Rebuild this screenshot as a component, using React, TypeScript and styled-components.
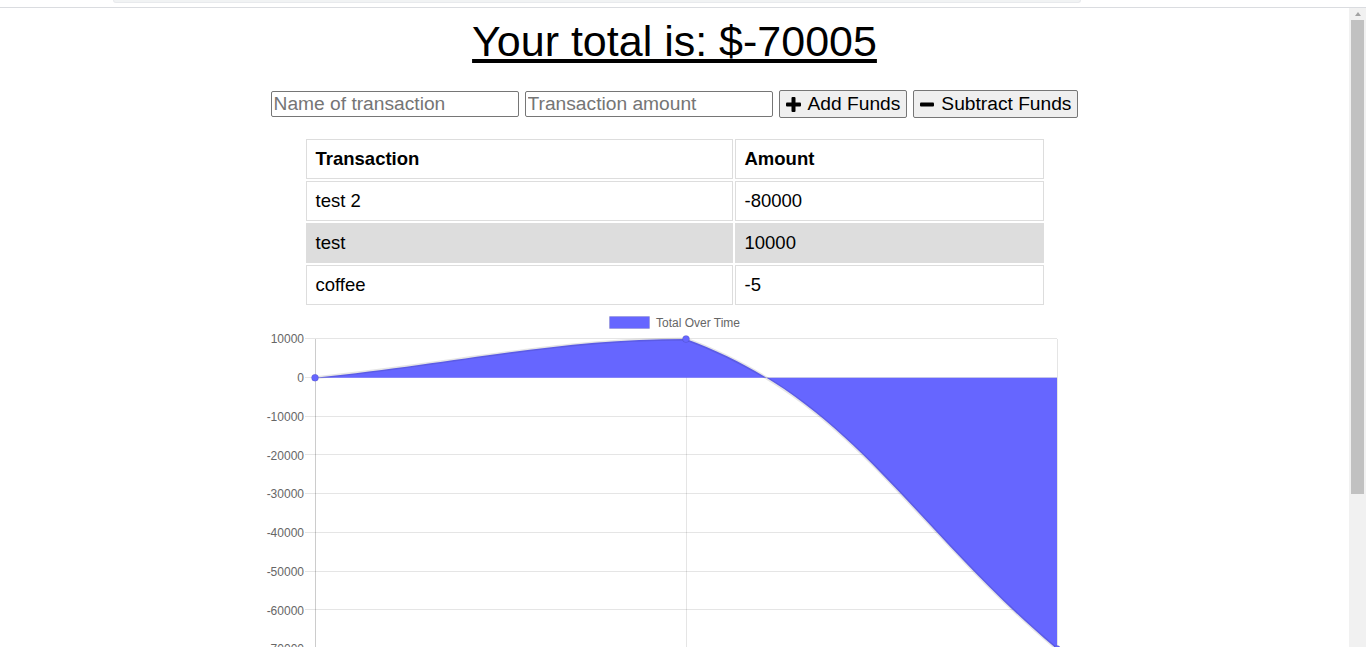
import React from "react";
import styled, { createGlobalStyle } from "styled-components";

interface Transaction {
  name: string;
  value: number;
}

const transactions: Transaction[] = [
  { name: "test 2", value: -80000 },
  { name: "test", value: 10000 },
  { name: "coffee", value: -5 },
];

const total = transactions.reduce((sum, t) => sum + t.value, 0);

// chart geometry, in canvas pixels (canvas is 60% of the page, aspect 2)
const CHART_W = 809;
const CHART_H = 404;
const AREA_LEFT = 45;
const AREA_RIGHT = 787;
const AREA_TOP = 32;
const STEP = 38.76; // px per 10000
const MAX = 10000;
const MIN = -80000;
const yOf = (v: number) => AREA_TOP + ((MAX - v) / 10000) * STEP;
const AREA_BOTTOM = yOf(MIN);

const series = [0, 10000, total];
const points = series.map((v, i) => ({
  x: AREA_LEFT + (i * (AREA_RIGHT - AREA_LEFT)) / (series.length - 1),
  y: yOf(v),
}));

const cap = (v: number, lo: number, hi: number) => Math.max(lo, Math.min(hi, v));

// same spline as chart.js v2 (tension 0.4, control points capped to the area)
function splinePath() {
  const t = 0.4;
  const ctrl = points.map((p, i) => {
    const prev = points[i - 1] || p;
    const next = points[i + 1] || p;
    const d01 = Math.hypot(p.x - prev.x, p.y - prev.y);
    const d12 = Math.hypot(next.x - p.x, next.y - p.y);
    let s01 = d01 / (d01 + d12);
    let s12 = d12 / (d01 + d12);
    if (isNaN(s01)) s01 = 0;
    if (isNaN(s12)) s12 = 0;
    const fa = t * s01;
    const fb = t * s12;
    return {
      px: cap(p.x - fa * (next.x - prev.x), AREA_LEFT, AREA_RIGHT),
      py: cap(p.y - fa * (next.y - prev.y), AREA_TOP, AREA_BOTTOM),
      nx: cap(p.x + fb * (next.x - prev.x), AREA_LEFT, AREA_RIGHT),
      ny: cap(p.y + fb * (next.y - prev.y), AREA_TOP, AREA_BOTTOM),
    };
  });
  let d = `M${points[0].x},${points[0].y}`;
  for (let i = 1; i < points.length; i++) {
    const a = ctrl[i - 1];
    const b = ctrl[i];
    d += ` C${a.nx},${a.ny} ${b.px},${b.py} ${points[i].x},${points[i].y}`;
  }
  return d;
}

const ticks: number[] = [];
for (let v = MAX; v >= MIN; v -= 10000) ticks.push(v);

const GlobalStyle = createGlobalStyle`
  html, body {
    margin: 0;
    height: 100%;
    overflow: hidden;
    background: #fff;
  }
`;

const Page = styled.div`
  display: flex;
  flex-direction: column;
  height: 100vh;
  font-family: "Liberation Sans", Arial, sans-serif;
  color: #000;
`;

const TopStrip = styled.div`
  height: 8px;
  box-sizing: border-box;
  border-bottom: 1px solid #dadce0;
  padding-left: 113px;
`;

const StripBar = styled.div`
  width: 968px;
  height: 3px;
  background: #f1f3f4;
  border: 1px solid #e8eaed;
  border-top: none;
  border-radius: 0 0 8px 8px;
  box-sizing: border-box;
`;

const Body = styled.div`
  display: flex;
  flex: 1;
  min-height: 0;
`;

const Main = styled.main`
  flex: 1;
  overflow: hidden;
  text-align: center;
`;

const Title = styled.h1`
  margin: 8px 0 0;
  font-size: 43px;
  line-height: 50px;
  font-weight: normal;
  text-decoration: underline;
`;

const Form = styled.div`
  display: flex;
  justify-content: center;
  align-items: center;
  gap: 6px;
  margin-top: 24px;
`;

const Input = styled.input`
  width: 248px;
  height: 26px;
  box-sizing: border-box;
  border: 1px solid #767676;
  border-radius: 2px;
  padding: 1px 2px;
  font-family: inherit;
  font-size: 19.2px;
  color: #000;

  &::placeholder {
    color: #757575;
  }
`;

const Button = styled.button`
  display: inline-flex;
  align-items: center;
  gap: 7px;
  height: 28px;
  box-sizing: border-box;
  padding: 0 6px;
  border: 1px solid #767676;
  border-radius: 2px;
  background: #efefef;
  font-family: inherit;
  font-size: 19.2px;
  color: #000;
`;

const Table = styled.table`
  width: 742px;
  margin: 19px auto 0;
  border-spacing: 2px;
  font-size: 18.5px;
  text-align: left;

  & th,
  & td {
    border: 1px solid #ddd;
    padding: 8px 10px 8px 9px;
    line-height: 22px;
  }

  & th:first-child {
    width: 406px;
  }

  & tbody tr:nth-child(even) td {
    background: #ddd;
  }
`;

const ChartWrap = styled.div`
  width: 60%;
  height: ${CHART_H}px;
  margin: 0 auto;

  & svg {
    display: block;
    overflow: visible;
  }
`;

const Scrollbar = styled.div`
  display: flex;
  flex-direction: column;
  align-items: center;
  width: 17px;
  background: #f1f1f1;
`;

const ArrowUp = styled.div`
  width: 0;
  height: 0;
  margin: 4px 0 4px;
  border-left: 3.5px solid transparent;
  border-right: 3.5px solid transparent;
  border-bottom: 4px solid #a3a3a3;
`;

const Thumb = styled.div`
  width: 13px;
  height: 474px;
  background: #c1c1c1;
`;

function PlusIcon() {
  return (
    <svg width="15" height="15" viewBox="0 0 15 15">
      <rect x="5.5" y="0" width="4" height="15" rx="1" fill="#000" />
      <rect x="0" y="5.5" width="15" height="4" rx="1" fill="#000" />
    </svg>
  );
}

function MinusIcon() {
  return (
    <svg width="14" height="15" viewBox="0 0 14 15">
      <rect x="0" y="5.5" width="14" height="4" rx="1" fill="#000" />
    </svg>
  );
}

function Chart() {
  const curve = splinePath();
  const zeroY = yOf(0);
  const last = points[points.length - 1];
  const fill = `${curve} L${last.x},${zeroY} L${points[0].x},${zeroY} Z`;

  return (
    <svg width={CHART_W} height={CHART_H} viewBox={`0 0 ${CHART_W} ${CHART_H}`}>
      <rect x="339.5" y="9.5" width="40" height="12" fill="#6666ff" stroke="rgba(0,0,0,0.1)" />
      <text x="386" y="19.5" fontSize="12" fill="#666" fontFamily="Liberation Sans, Arial, sans-serif">
        Total Over Time
      </text>

      {ticks.map((v) => {
        const y = Math.round(yOf(v)) - 0.5;
        return (
          <g key={v}>
            <line x1={AREA_LEFT - 10} x2={AREA_RIGHT} y1={y} y2={y} stroke="rgba(0,0,0,0.1)" />
            <text
              x={AREA_LEFT - 11}
              y={yOf(v) + 4.3}
              textAnchor="end"
              fontSize="12"
              fill="#666"
              fontFamily="Liberation Sans, Arial, sans-serif"
            >
              {v}
            </text>
          </g>
        );
      })}

      {points.map((p, i) => (
        <line
          key={i}
          x1={p.x + 0.5}
          x2={p.x + 0.5}
          y1={AREA_TOP}
          y2={AREA_BOTTOM + 10}
          stroke={i === 0 ? "rgba(0,0,0,0.2)" : "rgba(0,0,0,0.1)"}
        />
      ))}

      <path d={fill} fill="#6666ff" />
      <path d={curve} fill="none" stroke="rgba(0,0,0,0.1)" strokeWidth="3" />

      {points.map((p, i) => (
        <circle key={i} cx={p.x} cy={p.y} r="3.5" fill="#6666ff" stroke="rgba(0,0,0,0.1)" />
      ))}
    </svg>
  );
}

export default function App() {
  return (
    <Page>
      <GlobalStyle />
      <TopStrip>
        <StripBar />
      </TopStrip>
      <Body>
        <Main>
          <Title>Your total is: ${total}</Title>
          <Form>
            <Input type="text" placeholder="Name of transaction" />
            <Input type="number" placeholder="Transaction amount" />
            <Button>
              <PlusIcon />
              Add Funds
            </Button>
            <Button>
              <MinusIcon />
              Subtract Funds
            </Button>
          </Form>
          <Table>
            <thead>
              <tr>
                <th>Transaction</th>
                <th>Amount</th>
              </tr>
            </thead>
            <tbody>
              {transactions.map((t) => (
                <tr key={t.name}>
                  <td>{t.name}</td>
                  <td>{t.value}</td>
                </tr>
              ))}
            </tbody>
          </Table>
          <ChartWrap>
            <Chart />
          </ChartWrap>
        </Main>
        <Scrollbar>
          <ArrowUp />
          <Thumb />
        </Scrollbar>
      </Body>
    </Page>
  );
}
